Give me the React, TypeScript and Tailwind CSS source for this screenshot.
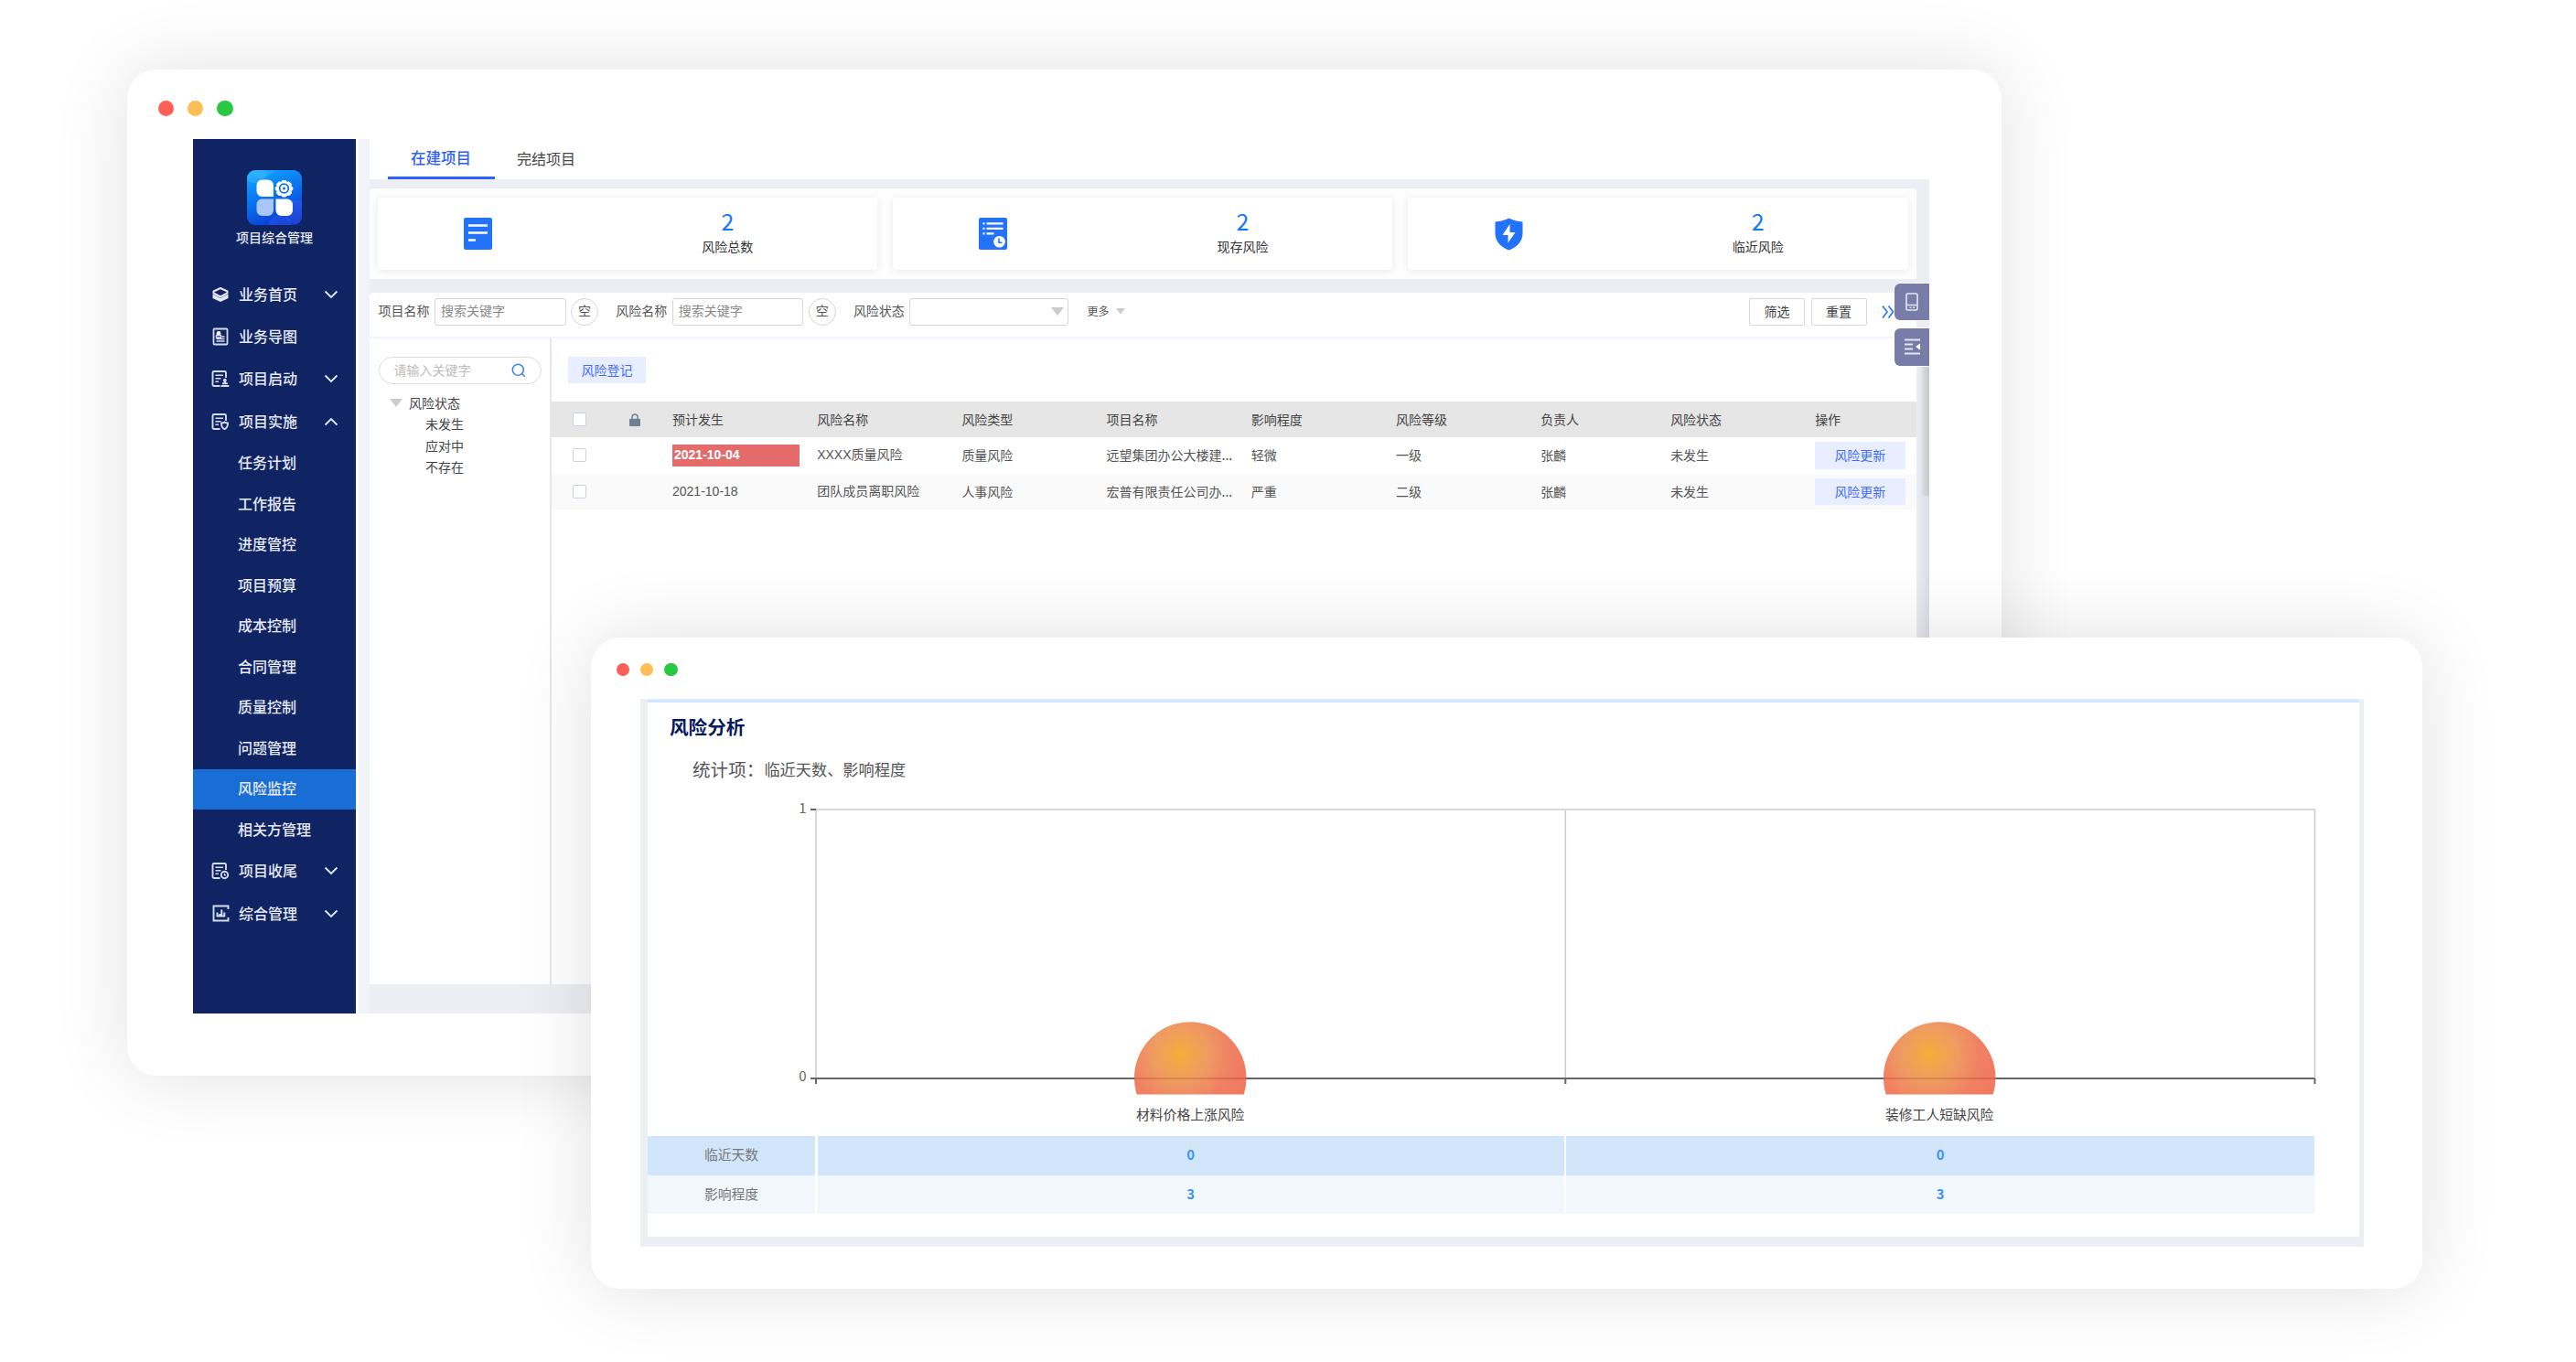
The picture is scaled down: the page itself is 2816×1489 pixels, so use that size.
import React from 'react';

interface DotsProps {
  className: string;
  dotClassName: string;
}

interface MenuEntry {
  label: string;
  icon: React.ReactNode;
  arrow?: 'up' | 'down';
}

interface RiskRow {
  date: string;
  overdue: boolean;
  name: string;
  type: string;
  project: string;
  impact: string;
  level: string;
  owner: string;
  status: string;
}

const TABLE_COLS =
  'grid grid-cols-[60px_62px_repeat(6,158.2px)_142px_158px_1fr] items-center';

const SUB_MENU = [
  '任务计划',
  '工作报告',
  '进度管控',
  '项目预算',
  '成本控制',
  '合同管理',
  '质量控制',
  '问题管理',
  '风险监控',
  '相关方管理',
];

const HEADERS = [
  '预计发生',
  '风险名称',
  '风险类型',
  '项目名称',
  '影响程度',
  '风险等级',
  '负责人',
  '风险状态',
  '操作',
];

const ROWS: RiskRow[] = [
  {
    date: '2021-10-04',
    overdue: true,
    name: 'XXXX质量风险',
    type: '质量风险',
    project: '远望集团办公大楼建...',
    impact: '轻微',
    level: '一级',
    owner: '张麟',
    status: '未发生',
  },
  {
    date: '2021-10-18',
    overdue: false,
    name: '团队成员离职风险',
    type: '人事风险',
    project: '宏普有限责任公司办...',
    impact: '严重',
    level: '二级',
    owner: '张麟',
    status: '未发生',
  },
];

const RISKS = ['材料价格上涨风险', '装修工人短缺风险'];

const ANALYSIS = [
  { label: '临近天数', values: [0, 0], bg: 'bg-[#d2e6fb]' },
  { label: '影响程度', values: [3, 3], bg: 'bg-[#f2f7fe]' },
];

const Dots: React.FC<DotsProps> = ({ className, dotClassName }) => (
  <div className={`flex ${className}`}>
    <span className={`rounded-full bg-[#ff5f57] ${dotClassName}`} />
    <span className={`rounded-full bg-[#ffbd55] ${dotClassName}`} />
    <span className={`rounded-full bg-[#28c840] ${dotClassName}`} />
  </div>
);

/* ---------- icons ---------- */

const LogoIcon = () => (
  <svg width="60" height="60" viewBox="0 0 60 60">
    <defs>
      <linearGradient id="logo-bg" x1="0.2" y1="0" x2="0.6" y2="1">
        <stop offset="0" stopColor="#12a4ff" />
        <stop offset="0.5" stopColor="#0a72f0" />
        <stop offset="1" stopColor="#0a35d0" />
      </linearGradient>
      <clipPath id="logo-clip">
        <rect width="60" height="60" rx="9" />
      </clipPath>
    </defs>
    <g clipPath="url(#logo-clip)">
      <rect width="60" height="60" fill="url(#logo-bg)" />
      <circle cx="8" cy="0" r="14" fill="#4cc2ff" opacity="0.35" />
      <circle cx="16" cy="-6" r="15" fill="#4cc2ff" opacity="0.25" />
      <circle cx="54" cy="46" r="13" fill="#4b62e8" opacity="0.35" />
      <circle cx="36" cy="62" r="13" fill="#3f6df0" opacity="0.3" />
    </g>
    <path d="M16.500 10.500H23a6 6 0 0 1 6 6V29H16.500a6 6 0 0 1-6-6v-6.500a6 6 0 0 1 6-6z" fill="#fff" />
    <path d="M16.500 31.500H29V44a6 6 0 0 1-6 6h-6.500a6 6 0 0 1-6-6v-6.500a6 6 0 0 1 6-6z" fill="#a9c6f8" />
    <path d="M31.500 31.500H44a6 6 0 0 1 6 6V44a6 6 0 0 1-6 6h-6.500a6 6 0 0 1-6-6z" fill="#fff" />
    <path
      d="M38.500 11.500h4l1 2 2.500-.7 2.500 2.500-.7 2.500 2 1v2.800l-2 1 .7 2.600-2.500 2.500-2.500-.7-1 2h-4l-1-2-2.500.7-2.500-2.500.7-2.600-2-1v-2.800l2-1-.7-2.500 2.500-2.500 2.500.7z"
      fill="#fff"
      stroke="#fff"
      strokeLinejoin="round"
    />
    <circle cx="40.500" cy="20" r="4.800" fill="none" stroke="#0b72ee" strokeWidth="1.800" />
    <circle cx="40.500" cy="20" r="1.500" fill="#0b72ee" />
  </svg>
);

const LayersIcon = () => (
  <svg width="20" height="18" viewBox="0 0 20 18" fill="none">
    <path d="M10 2l7.500 3.500v2L10 11.500 2.500 7.500v-2z" stroke="#e3e8f5" strokeWidth="2" strokeLinejoin="round" />
    <path d="M1.500 8.500L10 13l8.500-4.500V13L10 17 1.500 13z" fill="#e3e8f5" />
  </svg>
);

const BoardIcon = () => (
  <svg width="18" height="20" viewBox="0 0 18 20" fill="none">
    <rect x="1.500" y="1.500" width="15" height="17" rx="1" stroke="#d5dcf0" strokeWidth="1.800" />
    <circle cx="7" cy="6.500" r="2.400" fill="#fff" />
    <path d="M4.500 8.500h5v2.500h-5zM10.500 10h3M4.500 12.500h9M4.500 15h9" stroke="#d5dcf0" strokeWidth="1.400" />
  </svg>
);

const DocIcon = ({ children }: { children: React.ReactNode }) => (
  <svg width="20" height="20" viewBox="0 0 20 20" fill="none" stroke="#d5dcf0" strokeWidth="1.900">
    <path d="M9.500 18H3a1.500 1.500 0 0 1-1.500-1.500v-13A1.500 1.500 0 0 1 3 2h11.500A1.500 1.500 0 0 1 16 3.500V9" />
    <path d="M4.500 6.200H13M4.500 9.700h6M4.500 13.200h3.500" strokeWidth="1.600" />
    {children}
  </svg>
);

const PersonDocIcon = () => (
  <DocIcon>
    <circle cx="14.800" cy="11.800" r="2" fill="#d5dcf0" stroke="none" />
    <path d="M10.500 18h8.800M12 15.300h5.800" strokeWidth="2" />
    <path d="M14.800 12v4" strokeWidth="2" />
  </DocIcon>
);

const ShieldDocIcon = () => (
  <DocIcon>
    <path d="M11 11.500c2 0 3-.5 3.500-1 .8.600 1.700 1 3.500 1 0 3.500-.6 5.500-3.500 6.700-2.900-1.200-3.500-3.200-3.500-6.700z" />
  </DocIcon>
);

const ClockDocIcon = () => (
  <DocIcon>
    <circle cx="14.500" cy="14.500" r="3.700" />
    <path d="M14.500 12.800v2h1.700" strokeWidth="1.300" />
  </DocIcon>
);

const ChartBoxIcon = () => (
  <svg width="19" height="19" viewBox="0 0 19 19" fill="none" stroke="#d5dcf0" strokeWidth="1.900">
    <path d="M17.500 5V1.500h-16v16h16V14" />
    <path d="M5.500 13.200V8.500M8.300 13.200V10M10.300 13.200V5.500M13.300 13.200V8.500M4.600 12.500h9.600" strokeWidth="2" />
  </svg>
);

const Chevron = ({ up }: { up: boolean }) => (
  <svg width="16" height="10" viewBox="0 0 16 10" fill="none" stroke="#e3e8f5" strokeWidth="1.800">
    {up ? <path d="M1.500 8.500L8 2l6.500 6.500" /> : <path d="M1.500 1.500L8 8l6.500-6.500" />}
  </svg>
);

const TotalIcon = () => (
  <svg width="31" height="35" viewBox="0 0 31 35">
    <rect width="31" height="35" rx="2" fill="#2272fb" />
    <path d="M5 8.500h21M5 16.500h21M5 24.500h8" stroke="#fff" strokeWidth="2.400" />
  </svg>
);

const CurrentIcon = () => (
  <svg width="31" height="35" viewBox="0 0 31 35">
    <rect width="31" height="35" rx="2" fill="#2272fb" />
    <path d="M4.500 6.300h2M8.500 6.300h18M4.500 11.800h2M8.500 11.800h18M4.500 17.300h2M8.500 17.300h8" stroke="#fff" strokeWidth="2.200" />
    <circle cx="22.500" cy="26.300" r="6.300" fill="#fff" />
    <path d="M22 22.500v4.800h3.500" stroke="#2272fb" strokeWidth="1.600" fill="none" />
  </svg>
);

const ShieldIcon = () => (
  <svg className="ml-[1.500px]" width="31" height="36" viewBox="0 0 31 36">
    <path d="M15.500.5c4.500 2.500 9.500 3.600 15 4V17c0 9-6.500 15.500-15 18.500C7 32.500.5 26 .5 17V4.500c5.500-.4 10.500-1.500 15-4z" fill="#2272fb" />
    <path d="M16.500 7L8.500 19h6L14.500 27.500 22.500 16h-6z" fill="#fff" />
  </svg>
);

const Triangle = ({ size }: { size: number }) => (
  <svg width={size} height={size * 0.65} viewBox="0 0 14 9" preserveAspectRatio="none">
    <path d="M0 0h14L7 9z" fill="#cbcbcb" />
  </svg>
);

const SearchIcon = () => (
  <svg width="16" height="16" viewBox="0 0 16 16" fill="none" stroke="#3f86f0" strokeWidth="1.600">
    <circle cx="7.300" cy="7.300" r="6" />
    <path d="M11.500 11.500l3.300 3.300" />
  </svg>
);

const LockIcon = () => (
  <svg width="12" height="14" viewBox="0 0 12 14">
    <path d="M3 7V4a3 3 0 0 1 6 0v3" stroke="#6f8094" strokeWidth="1.500" fill="none" />
    <rect y="5.800" width="12" height="8.200" rx="1" fill="#6f8094" />
  </svg>
);

/* ---------- main window ---------- */

const MENU_TOP: MenuEntry[] = [
  { label: '业务首页', icon: <LayersIcon />, arrow: 'down' },
  { label: '业务导图', icon: <BoardIcon /> },
  { label: '项目启动', icon: <PersonDocIcon />, arrow: 'down' },
  { label: '项目实施', icon: <ShieldDocIcon />, arrow: 'up' },
];

const MENU_BOTTOM: MenuEntry[] = [
  { label: '项目收尾', icon: <ClockDocIcon />, arrow: 'down' },
  { label: '综合管理', icon: <ChartBoxIcon />, arrow: 'down' },
];

const MenuItem: React.FC<{ item: MenuEntry }> = ({ item }) => (
  <div className="flex h-[46.400px] items-center pr-[19px] pb-px pl-5">
    <span className="flex w-[20px] justify-center">{item.icon}</span>
    <span className="ml-2.5 flex-1 pb-[2px] text-[16px] font-medium">{item.label}</span>
    {item.arrow && <Chevron up={item.arrow === 'up'} />}
  </div>
);

const Sidebar = () => (
  <aside className="w-[178px] shrink-0 bg-[#102463] text-[#e6eaf6]">
    <div className="flex h-[147px] flex-col items-center pt-[34px]">
      <LogoIcon />
      <span className="mt-[2.500px] text-[14px] leading-[20px] font-medium">项目综合管理</span>
    </div>
    {MENU_TOP.map((item) => (
      <MenuItem key={item.label} item={item} />
    ))}
    {SUB_MENU.map((label) => (
      <div
        key={label}
        className={`flex h-[44.500px] items-center pb-[3px] pl-[49px] text-[16px] font-medium ${
          label === '风险监控' ? 'bg-[#186ed5]' : ''
        }`}
      >
        {label}
      </div>
    ))}
    {MENU_BOTTOM.map((item) => (
      <MenuItem key={item.label} item={item} />
    ))}
  </aside>
);

const StatCard: React.FC<{ icon: React.ReactNode; value: number; label: string }> = ({
  icon,
  value,
  label,
}) => (
  <div className="flex h-[79px] flex-1 rounded bg-white shadow-[0_1px_10px_rgba(0,0,0,0.09)]">
    <div className="flex w-2/5 items-center justify-center">{icon}</div>
    <div className="flex w-3/5 flex-col items-center pt-[9px]">
      <span className="text-[25px] leading-[32px] text-[#1677f5]">{value}</span>
      <span className="mt-px text-[14px] leading-[22px] text-[#333]">{label}</span>
    </div>
  </div>
);

const KeywordFilter: React.FC<{ label: string }> = ({ label }) => (
  <div className="mr-[19.200px] flex items-center">
    <span className="w-[56px] pb-[2px]">{label}</span>
    <div className="ml-[5.500px] flex h-[30px] w-[143.500px] items-center rounded-[3px] border border-[#d6d6d6] pb-[2px] pl-1.5 text-[#8a8a8a]">
      搜索关键字
    </div>
    <span className="ml-[5.500px] flex size-[30px] items-center justify-center rounded-full border border-[#d6d6d6] pb-[2px]">
      空
    </span>
  </div>
);

const FilterBar = () => (
  <div className="flex h-[50px] items-start border-b-2 border-[#eff4ff] pt-1.5 pl-[9.500px] text-[14px] text-[#555]">
    <KeywordFilter label="项目名称" />
    <KeywordFilter label="风险名称" />
    <div className="flex h-[30px] items-center">
      <span className="w-[56px] pb-[2px]">风险状态</span>
      <div className="ml-[5.500px] flex h-[30px] w-[174px] items-center justify-end rounded-[3px] border border-[#d6d6d6] pr-[4px]">
        <Triangle size={14} />
      </div>
      <span className="mr-2 ml-5 pb-[2px] text-[12px]">更多</span>
      <Triangle size={10} />
    </div>
    <div className="ml-auto flex h-[30px] items-center text-[#444]">
      <span className="flex h-[30px] w-[61px] items-center justify-center rounded-[2px] border border-[#d9d9d9] pb-px">筛选</span>
      <span className="ml-[6.500px] flex h-[30px] w-[61px] items-center justify-center rounded-[2px] border border-[#d9d9d9] pb-px">
        重置
      </span>
      <svg className="mr-6 ml-4" width="14" height="16" viewBox="0 0 14 16" fill="none" stroke="#2a78f5" strokeWidth="1.700">
        <path d="M1 1.500L6 8l-5 6.500M7.500 1.500L12.500 8l-5 6.500" />
      </svg>
    </div>
  </div>
);

const StatusTree = () => (
  <div className="w-[199px] shrink-0 border-r-2 border-[#e8e8e8] pt-5 pl-[9.500px] text-[14px] text-[#444]">
    <div className="flex h-[30px] w-[178px] items-center justify-between rounded-full border border-[#dcdcdc] px-4 text-[#bdbdbd]">
      <span className="pb-px">请输入关键字</span>
      <SearchIcon />
    </div>
    <div className="mt-[9.500px] flex h-[24px] items-center pl-[12.500px]">
      <Triangle size={14} />
      <span className="ml-[7px] pb-[2px]">风险状态</span>
    </div>
    {['未发生', '应对中', '不存在'].map((status) => (
      <div key={status} className="flex h-[23.700px] items-center pb-[2.500px] pl-[51.500px]">
        {status}
      </div>
    ))}
  </div>
);

const Checkbox = () => (
  <span className="size-[15px] justify-self-center rounded-[2px] border-[1.500px] border-[#c9d3e0] bg-white" />
);

const RiskTable = () => (
  <div className="flex-1 text-[14px] text-[#555]">
    <div className="h-[69px] pt-5 pl-[18px]">
      <span className="flex h-[29.500px] w-[85px] items-center justify-center bg-[#e8eeff] text-[#3f6bff]">风险登记</span>
    </div>
    <div className={`h-[39.500px] bg-[#e6e6e6] text-[#444] ${TABLE_COLS}`}>
      <Checkbox />
      <span className="justify-self-center pt-px">
        <LockIcon />
      </span>
      {HEADERS.map((header) => (
        <span key={header} className="pl-2.5">
          {header}
        </span>
      ))}
    </div>
    {ROWS.map((row) => (
      <div key={row.date} className={`h-[39.500px] ${row.overdue ? 'bg-white' : 'bg-[#fafafa]'} ${TABLE_COLS}`}>
        <Checkbox />
        <span />
        <span className="pl-2.5 font-['Liberation_Sans','Noto_Sans_CJK_SC',sans-serif]">
          {row.overdue ? (
            <b className="flex h-[24.500px] w-[139px] items-center bg-[#e56b6b] pl-0.5 text-white">{row.date}</b>
          ) : (
            row.date
          )}
        </span>
        <span className="pl-2.5 font-['Liberation_Sans','Noto_Sans_CJK_SC',sans-serif]">{row.name}</span>
        <span className="pl-2.5">{row.type}</span>
        <span className="pl-2.5 whitespace-nowrap">{row.project}</span>
        <span className="pl-2.5">{row.impact}</span>
        <span className="pl-2.5">{row.level}</span>
        <span className="pl-2.5">{row.owner}</span>
        <span className="pl-2.5">{row.status}</span>
        <span className="ml-2.5 flex h-[29.500px] w-[98.500px] items-center justify-center bg-[#e8eeff] text-[#3f6bff]">
          风险更新
        </span>
      </div>
    ))}
  </div>
);

const SideTools = () => (
  <div className="absolute top-[157.500px] right-0 flex flex-col gap-[9px]">
    <span className="flex h-[40.500px] w-[38px] items-center justify-center rounded-l-md bg-[#777ca8] shadow-[0_0_0_1px_rgba(255,255,255,0.8)]">
      <svg width="14" height="20" viewBox="0 0 14 20" fill="none" stroke="#e4e6f2" strokeWidth="1.600">
        <rect x="1" y="1" width="12" height="18" rx="1.500" />
        <path d="M1 13.500h12M4.500 16.300h2M8 16.300h2" />
      </svg>
    </span>
    <span className="flex h-[40.500px] w-[38px] items-center justify-center rounded-l-md bg-[#777ca8] shadow-[0_0_0_1px_rgba(255,255,255,0.8)]">
      <svg width="17" height="18" viewBox="0 0 17 18" fill="none" stroke="#e4e6f2" strokeWidth="2">
        <path d="M0 1.500h17M0 6.500h9M0 11.500h9M0 16.500h17" />
        <path d="M17 5.500v7L12 9z" fill="#fff" stroke="none" />
      </svg>
    </span>
  </div>
);

const ProjectWindow = () => (
  <section className="absolute top-[76px] left-[139px] h-[1100px] w-[2049px] rounded-[32px] bg-white shadow-[0_0_84px_rgba(0,0,0,0.12)]">
    <Dots className="gap-[14.800px] pt-[33.500px] pl-[33.500px]" dotClassName="size-[17.500px]" />
    <div className="relative mt-[25px] ml-[72px] flex h-[956px] w-[1898px]">
      <Sidebar />
      <div className="ml-[3px] w-[12px] shrink-0 bg-[#f0f4f8]" />
      <main className="flex flex-1 flex-col bg-[#eceef4]">
        <div className="flex h-[44px] bg-white pl-5">
          <span className="flex w-[117px] justify-center border-b-[3px] border-[#2b62ff] pt-[8px] pr-px text-[16.500px] leading-[24px] font-medium text-[#2f5fff]">
            在建项目
          </span>
          <span className="pt-[8.500px] pl-6 text-[16px] leading-[24px] text-[#444]">完结项目</span>
        </div>
        <div className="mt-2.5 mr-[14.500px] flex h-[99px] items-center gap-[17px] rounded-t bg-[#fefefe] px-[9px]">
          <StatCard icon={<TotalIcon />} value={2} label="风险总数" />
          <StatCard icon={<CurrentIcon />} value={2} label="现存风险" />
          <StatCard icon={<ShieldIcon />} value={2} label="临近风险" />
        </div>
        <div className="mt-[14.500px] mr-[14.500px] flex h-[756.500px] flex-col rounded-t bg-white">
          <FilterBar />
          <div className="flex flex-1">
            <StatusTree />
            <RiskTable />
          </div>
        </div>
      </main>
      <div className="absolute top-[240px] right-0 h-[716px] w-[14px] bg-gradient-to-r from-[#eceef4] to-[#dcdde4]" />
      <div className="absolute top-[240px] right-0 h-[150px] w-[10px] rounded-bl bg-gradient-to-r from-transparent to-[#c6c6cb]" />
      <SideTools />
    </div>
  </section>
);

/* ---------- analysis window ---------- */

const RiskChart = () => (
  <svg
    className="block font-['Noto_Sans_CJK_SC',sans-serif]"
    width="1840"
    height="370"
    viewBox="708 872 1840 370"
  >
    <defs>
      <radialGradient id="bubble" cx="0.410" cy="0.290" r="0.800">
        <stop offset="0" stopColor="#f3a11a" />
        <stop offset="0.320" stopColor="#ec8a49" />
        <stop offset="0.560" stopColor="#ee6c4a" />
        <stop offset="1" stopColor="#ec5c44" />
      </radialGradient>
      <clipPath id="plot-clip">
        <rect x="708" y="872" width="1840" height="324.500" />
      </clipPath>
    </defs>
    <path d="M892 885H2530.500V1179M892 885V1179M1711.300 885V1179" fill="none" stroke="#cccccc" strokeWidth="1.500" />
    <path d="M886 885h6M886 1179H2530.500M892 1179v6M1711.300 1179v6M2530.500 1179v6" fill="none" stroke="#666" strokeWidth="2" />
    <g fill="#666" fontSize="15" textAnchor="end">
      <text x="881.500" y="888.500">1</text>
      <text x="881.500" y="1182">0</text>
    </g>
    {RISKS.map((risk, index) => (
      <g key={risk}>
        <circle
          cx={1301.200 + index * 819}
          cy="1178.500"
          r="61.300"
          fill="url(#bubble)"
          fillOpacity="0.860"
          clipPath="url(#plot-clip)"
        />
        <text x={1301.200 + index * 819} y="1224" fontSize="14.800" fill="#444" textAnchor="middle">
          {risk}
        </text>
      </g>
    ))}
  </svg>
);

const AnalysisWindow = () => (
  <section className="absolute top-[697px] left-[646px] h-[712px] w-[2002px] rounded-[32px] bg-white shadow-[0_0_84px_rgba(0,0,0,0.12)]">
    <Dots className="gap-[11.900px] pt-[27.500px] pl-[27.500px]" dotClassName="size-[14.500px]" />
    <div className="mt-[25px] ml-[54px] h-[599px] w-[1884px] border-t border-r-[5px] border-b-[11px] border-l-8 border-t-[#e8eff6] border-r-[#eaf0f6] border-b-[#eceef4] border-l-[#ebeff4]">
      <div className="h-full border-t-[3px] border-[#d0e6fc]">
        <h2 className="pt-[11px] pl-6 text-[20.600px] leading-[30px] font-bold text-[#071a5e]">风险分析</h2>
        <p className="flex h-[63px] items-center pl-[49px] leading-[30px] text-[#555]">
          <span className="text-[19.600px]">统计项：</span>
          <span className="text-[17.200px]">临近天数、影响程度</span>
        </p>
        <RiskChart />
        {ANALYSIS.map((row) => (
          <div key={row.label} className="grid h-[42.700px] w-[1822px] grid-cols-[183px_816px_818px] gap-[2.500px] text-[14.800px]">
            <span className={`flex items-center justify-center pb-[2px] text-[#777] ${row.bg}`}>{row.label}</span>
            {row.values.map((value, index) => (
              <span key={index} className={`flex items-center justify-center pb-[2px] font-bold text-[#3d93ee] ${row.bg}`}>
                {value}
              </span>
            ))}
          </div>
        ))}
      </div>
    </div>
  </section>
);

export default function App() {
  return (
    <div className="relative h-[1489px] w-[2816px] overflow-hidden bg-white font-['Noto_Sans_CJK_SC',sans-serif]">
      <ProjectWindow />
      <AnalysisWindow />
    </div>
  );
}
